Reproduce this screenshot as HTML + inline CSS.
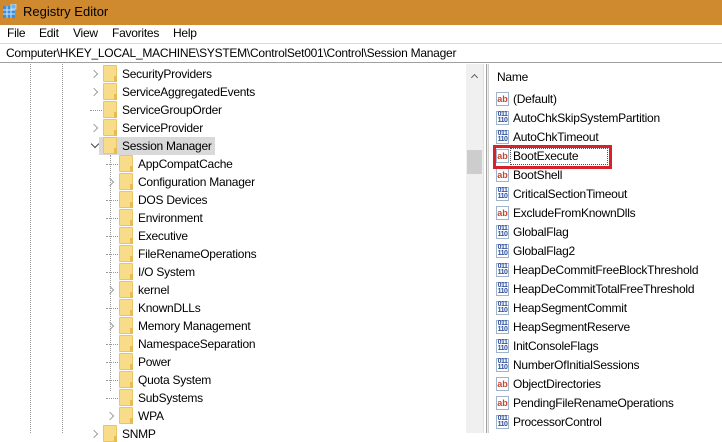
<!DOCTYPE html><html><head><meta charset="utf-8"><style>
*{margin:0;padding:0;box-sizing:border-box}
body{width:722px;height:433px;overflow:hidden;background:#fff;font-family:"Liberation Sans",sans-serif;font-size:12px;letter-spacing:-0.25px;color:#000;position:relative}
.t{position:absolute;white-space:nowrap}
#title{position:absolute;left:0;top:0;width:722px;height:25px;background:#cf8a2f}
#menu{position:absolute;left:0;top:25px;width:722px;height:18px;background:#fff}
#addr{position:absolute;left:0;top:43px;width:722px;height:20px;border-top:1px solid #d8d8d8;border-bottom:1px solid #a0a0a0;background:#fff}
.f{position:absolute;width:14px;height:17px;background:#f9dc8a;border:1px solid #e8c46a;border-radius:1px}
.f:after{content:"";position:absolute;right:-1px;bottom:-1px;width:3px;height:6px;background:#e5bb52}
.dv{position:absolute;width:0;border-left:1px dotted #999}
.dh{position:absolute;height:0;border-top:1px dotted #999}
.ch{position:absolute;width:6px;height:6px;border-right:1.5px solid #a0a0a0;border-bottom:1.5px solid #a0a0a0;transform:rotate(-45deg)}
.ic{position:absolute;width:13px;height:14px;border:1px solid #9fb3cc;background:#fff;font-size:9px;font-weight:bold;line-height:12px;text-align:center;letter-spacing:0}
.ab{color:#c7442a}
.bn{color:#2b4d9c;font-size:7px;line-height:6px;letter-spacing:-0.5px}
</style></head><body>
<div id="title">
<svg style="position:absolute;left:3px;top:4px" width="14" height="15"><rect x="0" y="2" width="12" height="12" fill="#3d8ed8"/><g stroke="#cfe4f7" stroke-width="1"><line x1="4" y1="2" x2="4" y2="14"/><line x1="8" y1="2" x2="8" y2="14"/><line x1="0" y1="6" x2="12" y2="6"/><line x1="0" y1="10" x2="12" y2="10"/></g><rect x="8" y="0" width="5" height="5" fill="#6fb3ec" stroke="#fff" stroke-width=".5"/></svg>
<span class="t" style="left:23px;top:4px;font-size:13px;letter-spacing:0">Registry Editor</span></div>
<div id="menu"><span class="t" style="left:7px;top:1px">File</span><span class="t" style="left:39px;top:1px">Edit</span><span class="t" style="left:73px;top:1px">View</span><span class="t" style="left:112px;top:1px">Favorites</span><span class="t" style="left:173px;top:1px">Help</span></div>
<div id="addr"><span class="t" style="left:6px;top:2px">Computer\HKEY_LOCAL_MACHINE\SYSTEM\ControlSet001\Control\Session Manager</span></div>
<div class="dv" style="left:30px;top:64px;height:369px"></div>
<div class="dv" style="left:62px;top:64px;height:369px"></div>
<div class="dv" style="left:110px;top:155px;height:236px"></div>
<div style="position:absolute;left:99px;top:137px;width:116px;height:18px;background:#d9d9d9"></div>
<div id="tree"></div>
<div style="position:absolute;left:466px;top:64px;width:17px;height:369px;background:#f0f0f0"></div>
<div class="ch" style="left:472px;top:75px;transform:rotate(-135deg);width:5px;height:5px;border-color:#606060"></div>
<div style="position:absolute;left:467px;top:150px;width:15px;height:24px;background:#cdcdcd"></div>
<div style="position:absolute;left:483px;top:64px;width:1px;height:369px;background:#e0e0e0"></div>
<div style="position:absolute;left:486px;top:64px;width:3px;height:369px;background:#f0f0f0;border-left:1px solid #a0a0a0;border-right:1px solid #d0d0d0"></div>
<span class="t" style="left:497px;top:70px">Name</span>
<div id="right"></div>
<div style="position:absolute;left:493px;top:145px;width:119px;height:24px;border:3px solid #d7222b"></div>
<div style="position:absolute;left:510px;top:148px;width:98px;height:17px;border:1px dotted #555"></div>
<script>
var T=[[1,'SecurityProviders',1],[1,'ServiceAggregatedEvents',1],[1,'ServiceGroupOrder',0],[1,'ServiceProvider',1],[1,'Session Manager',2],[2,'AppCompatCache',0],[2,'Configuration Manager',1],[2,'DOS Devices',0],[2,'Environment',0],[2,'Executive',0],[2,'FileRenameOperations',0],[2,'I/O System',0],[2,'kernel',1],[2,'KnownDLLs',0],[2,'Memory Management',1],[2,'NamespaceSeparation',0],[2,'Power',0],[2,'Quota System',0],[2,'SubSystems',0],[2,'WPA',1],[1,'SNMP',1]];
var h='';T.forEach(function(r,i){var y=65+i*18,l=r[0],fx=l==1?103:119,tx=l==1?122:138,cx=l==1?91:107;
h+='<div class="f" style="left:'+fx+'px;top:'+y+'px"></div><span class="t" style="left:'+tx+'px;top:'+(y+2)+'px">'+r[1]+'</span>';
if(r[2]==1)h+='<div class="ch" style="left:'+cx+'px;top:'+(y+6)+'px"></div>';
else if(r[2]==2)h+='<div class="ch" style="left:'+(cx+1)+'px;top:'+(y+4)+'px;transform:rotate(45deg);border-color:#444"></div>';
else h+='<div class="dh" style="left:'+(cx-1)+'px;top:'+(y+9)+'px;width:'+(fx-cx)+'px"></div>';});
document.getElementById('tree').innerHTML=h;
var R=[['a','(Default)'],['b','AutoChkSkipSystemPartition'],['b','AutoChkTimeout'],['a','BootExecute'],['a','BootShell'],['b','CriticalSectionTimeout'],['a','ExcludeFromKnownDlls'],['b','GlobalFlag'],['b','GlobalFlag2'],['b','HeapDeCommitFreeBlockThreshold'],['b','HeapDeCommitTotalFreeThreshold'],['b','HeapSegmentCommit'],['b','HeapSegmentReserve'],['b','InitConsoleFlags'],['b','NumberOfInitialSessions'],['a','ObjectDirectories'],['a','PendingFileRenameOperations'],['b','ProcessorControl']];
h='';R.forEach(function(r,i){var y=91+i*19;
h+=r[0]=='a'?'<div class="ic ab" style="left:496px;top:'+(y+1)+'px">ab</div>':'<div class="ic bn" style="left:496px;top:'+(y+1)+'px">011<br>110</div>';
h+='<span class="t" style="left:513px;top:'+(y+1)+'px">'+r[1]+'</span>';});
document.getElementById('right').innerHTML=h;
</script>
</body></html>
